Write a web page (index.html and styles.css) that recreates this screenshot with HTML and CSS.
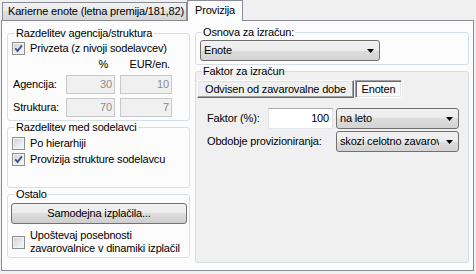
FILE: index.html
```html
<!DOCTYPE html>
<html>
<head>
<meta charset="utf-8">
<title>Provizija</title>
<link rel="stylesheet" href="styles.css">
</head>
<body>
<div class="tabs">
  <div class="tab">Karierne enote (letna premija/181,82)</div>
  <div class="tab active">Provizija</div>
</div>
<div class="panel">
  <div class="col col-left">
    <fieldset class="grp g-split">
      <legend>Razdelitev agencija/struktura</legend>
      <div class="chk-row"><span class="chk"><svg viewBox="0 0 11 11" width="11" height="11"><path d="M2.2 5.4 L4.6 8 L8.9 2.4" /></svg></span>Privzeta (z nivoji sodelavcev)</div>
      <div class="num-head"><span class="h1">%</span><span class="h2">EUR/en.</span></div>
      <div class="num-row"><span class="lbl">Agencija:</span><span class="num n1">30</span><span class="num n2">10</span></div>
      <div class="num-row"><span class="lbl">Struktura:</span><span class="num n1">70</span><span class="num n2">7</span></div>
    </fieldset>
    <fieldset class="grp g-among">
      <legend>Razdelitev med sodelavci</legend>
      <div class="chk-row first"><span class="chk"></span>Po hierarhiji</div>
      <div class="chk-row"><span class="chk"><svg viewBox="0 0 11 11" width="11" height="11"><path d="M2.2 5.4 L4.6 8 L8.9 2.4" /></svg></span>Provizija strukture sodelavcu</div>
    </fieldset>
    <fieldset class="grp g-other">
      <legend>Ostalo</legend>
      <div class="btn">Samodejna izplačila...</div>
      <div class="chk-row two"><span class="chk"></span><span>Upoštevaj posebnosti<br>zavarovalnice v dinamiki izplačil</span></div>
    </fieldset>
  </div>
  <div class="col col-right">
    <fieldset class="grp g-base">
      <legend>Osnova za izračun:</legend>
      <div class="combo c-base"><span class="ctext">Enote</span><svg class="arrow" width="7" height="4" viewBox="0 0 7 4"><path d="M0 0H7L3.5 4Z"/></svg></div>
    </fieldset>
    <fieldset class="grp g-factor">
      <legend>Faktor za izračun</legend>
      <div class="itabs">
        <div class="itab">Odvisen od zavarovalne dobe</div>
        <div class="itab on">Enoten</div>
      </div>
      <div class="frow first">
        <span class="flbl">Faktor (%):</span>
        <span class="inp">100</span>
        <div class="combo c-small"><span class="ctext">na leto</span><svg class="arrow" width="7" height="4" viewBox="0 0 7 4"><path d="M0 0H7L3.5 4Z"/></svg></div>
      </div>
      <div class="frow">
        <span class="flbl wide">Obdobje provizioniranja:</span>
        <div class="combo c-small"><span class="ctext clip">skozi celotno zavarovalno dobo</span><svg class="arrow" width="7" height="4" viewBox="0 0 7 4"><path d="M0 0H7L3.5 4Z"/></svg></div>
      </div>
    </fieldset>
  </div>
</div>
</body>
</html>
```

FILE: styles.css
```css
* { box-sizing: border-box; }

body {
  margin: 0;
  width: 476px;
  height: 274px;
  overflow: hidden;
  background: #f0f0f0;
  color: #000;
  font-family: "Liberation Sans", Arial, sans-serif;
  font-size: 11px;
  line-height: 13px;
  letter-spacing: -0.17px;
}

/* top tab strip */
.tabs {
  display: flex;
  align-items: flex-end;
  height: 20px;
  padding-left: 2px;
}
.tab {
  width: 185px;
  height: 18px;
  padding-left: 5px;
  border: 1px solid #898c95;
  border-bottom: none;
  background: linear-gradient(#f2f2f2, #e9e9e9 50%, #dedede 50%, #d6d6d6);
  line-height: 17px;
  white-space: nowrap;
}
.tab.active {
  width: 56px;
  height: 21px;
  margin-bottom: -1px;
  padding-left: 7px;
  background: #fcfcfc;
  line-height: 19px;
  position: relative;
  z-index: 1;
}

/* tab page */
.panel {
  margin-left: 1px;
  width: 473px;
  height: 251px;
  border: 1px solid #898c95;
  background: #fcfcfc;
  display: flex;
  gap: 5px;
  padding: 0 4px 0 5px;
}
.col { display: flex; flex-direction: column; }
.col-left { width: 183px; padding-top: 6px; }
.col-right { width: 274px; padding-top: 5px; }

/* group boxes */
fieldset.grp {
  margin: 0;
  padding: 0;
  min-width: 0;
  border: 1px solid #d5dfe5;
  border-radius: 3px;
}
fieldset.grp legend {
  padding: 0 1px;
  margin-left: 7px;
  line-height: 13px;
}
.col-right fieldset.grp legend { margin-left: 6px; }
.g-split { height: 94px; }
.g-among { height: 67px; margin-top: 5px; }
.g-other { height: 70px; margin-top: 3px; }
.g-base { height: 39px; }
.g-factor { height: 198px; margin-top: 3px; background: #f0f0f0; }

/* checkboxes */
.chk-row {
  display: flex;
  align-items: center;
  gap: 5px;
  height: 16px;
  padding-left: 4px;
  white-space: nowrap;
}
.chk-row.first { margin-top: 1px; }
.chk-row.two { height: 26px; margin-top: 5px; }
.chk {
  flex: none;
  width: 13px;
  height: 13px;
  border: 1px solid #8e8f8f;
  background: linear-gradient(135deg, #cdd0d4, #eeeff0 70%, #f7f7f7);
  box-shadow: inset 0 0 0 1px #f2f2f2;
  display: flex;
  align-items: center;
  justify-content: center;
}
.chk svg path {
  fill: none;
  stroke: #3f5590;
  stroke-width: 1.9;
}

/* numeric table */
.num-head {
  display: flex;
  height: 13px;
  margin-top: 2px;
  padding-left: 58px;
}
.num-head .h1 { width: 49px; text-align: right; padding-right: 7px; }
.num-head .h2 { width: 52px; margin-left: 5px; text-align: right; padding-right: 2px; }
.num-row {
  display: flex;
  align-items: center;
  height: 19px;
  margin-top: 4px;
  padding-left: 5px;
}
.num-row .lbl { width: 53px; }
.num {
  height: 19px;
  border: 1px solid #c9c9c9;
  background: #f0f0f0;
  color: #8c8c8c;
  text-align: right;
  padding-right: 2px;
  line-height: 17px;
}
.num.n1 { width: 49px; }
.num.n2 { width: 52px; margin-left: 5px; }

/* button */
.btn {
  height: 21px;
  margin: 2px 2px 0 3px;
  border: 1px solid #707070;
  border-radius: 3px;
  background: linear-gradient(#f2f2f2, #ebebeb 50%, #dddddd 50%, #cfcfcf);
  text-align: center;
  line-height: 19px;
}

/* combo boxes */
.combo {
  display: flex;
  align-items: center;
  height: 21px;
  border: 1px solid #707070;
  border-radius: 3px;
  background: linear-gradient(#f2f2f2, #ebebeb 50%, #dddddd 50%, #d3d3d3);
  padding-left: 3px;
}
.combo .ctext {
  flex: 1;
  white-space: nowrap;
  overflow: hidden;
}
.combo .ctext.clip { flex: none; width: 99px; }
.combo .arrow { flex: none; margin: 0 5px 0 auto; }
.c-base { width: 180px; margin: 1px 0 0 4px; }
.c-small { width: 123px; }

/* inner button-style tabs */
.itabs {
  display: flex;
  gap: 1px;
  margin: 2px 0 0 1px;
}
.itab {
  height: 18px;
  border: 1px solid;
  border-color: #ffffff #696969 #696969 #ffffff;
  box-shadow: inset -1px -1px 0 #a0a0a0, inset 1px 1px 0 #e3e3e3;
  background: #f0f0f0;
  text-align: center;
  line-height: 16px;
  white-space: nowrap;
  width: 157px;
}
.itab.on {
  width: 47px;
  border-color: #a0a0a0 #ffffff #ffffff #a0a0a0;
  box-shadow: inset 1px 1px 0 #696969, inset -1px -1px 0 #e3e3e3;
  background: #f9f9f9;
}

/* factor rows */
.frow {
  display: flex;
  align-items: center;
  height: 21px;
  margin-top: 2px;
  padding-left: 11px;
}
.frow.first { margin-top: 10px; }
.flbl { width: 61px; white-space: nowrap; }
.flbl.wide { width: 129px; }
.inp {
  width: 65px;
  height: 21px;
  margin-right: 3px;
  border: 1px solid;
  border-color: #abadb3 #dbdfe6 #e3e9ef #e2e3ea;
  background: #fff;
  text-align: right;
  padding-right: 3px;
  line-height: 19px;
}
```
